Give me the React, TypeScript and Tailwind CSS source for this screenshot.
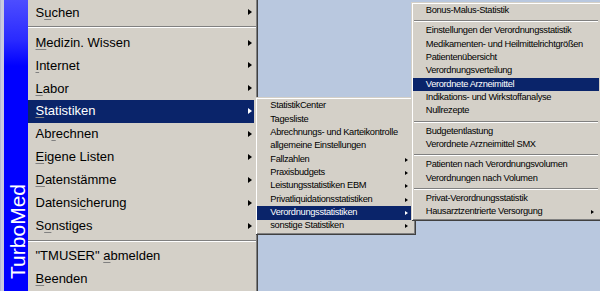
import React from "react";

type MainEntry =
  | { sep: true }
  | { pre: string; u: string; post: string; arrow?: boolean; active?: boolean };

const mainItems: MainEntry[] = [
  { pre: "S", u: "u", post: "chen", arrow: true },
  { sep: true },
  { pre: "", u: "M", post: "edizin. Wissen", arrow: true },
  { pre: "", u: "I", post: "nternet", arrow: true },
  { pre: "", u: "L", post: "abor", arrow: true },
  { pre: "", u: "S", post: "tatistiken", arrow: true, active: true },
  { pre: "Ab", u: "r", post: "echnen", arrow: true },
  { pre: "", u: "E", post: "igene Listen", arrow: true },
  { pre: "", u: "D", post: "atenstämme", arrow: true },
  { pre: "Datensi", u: "c", post: "herung", arrow: true },
  { pre: "S", u: "o", post: "nstiges", arrow: true },
  { sep: true },
  { pre: '"TMUSER" ', u: "a", post: "bmelden" },
  { pre: "", u: "B", post: "eenden" },
];

type SubEntry = { sep: true } | { label: string; arrow?: boolean; active?: boolean };

const statItems: SubEntry[] = [
  { label: "StatistikCenter" },
  { label: "Tagesliste" },
  { label: "Abrechnungs- und Karteikontrolle" },
  { label: "allgemeine Einstellungen" },
  { label: "Fallzahlen", arrow: true },
  { label: "Praxisbudgets", arrow: true },
  { label: "Leistungsstatistiken EBM", arrow: true },
  { label: "Privatliquidationsstatistiken", arrow: true },
  { label: "Verordnungsstatistiken", arrow: true, active: true },
  { label: "sonstige Statistiken", arrow: true },
];

const vdgItems: SubEntry[] = [
  { label: "Bonus-Malus-Statistik" },
  { sep: true },
  { label: "Einstellungen der Verordnungsstatistik" },
  { label: "Medikamenten- und Heilmittelrichtgrößen" },
  { label: "Patientenübersicht" },
  { label: "Verordnungsverteilung" },
  { label: "Verordnete Arzneimittel", active: true },
  { label: "Indikations- und Wirkstoffanalyse" },
  { label: "Nullrezepte" },
  { sep: true },
  { label: "Budgetentlastung" },
  { label: "Verordnete Arzneimittel SMX" },
  { sep: true },
  { label: "Patienten nach Verordnungsvolumen" },
  { label: "Verordnungen nach Volumen" },
  { sep: true },
  { label: "Privat-Verordnungsstatistik" },
  { label: "Hausarztzentrierte Versorgung", arrow: true },
];

function Arrow({ white, small }: { white?: boolean; small?: boolean }) {
  return small ? (
    <span
      className={`w-0 h-0 shrink-0 border-y-[2.5px] border-y-transparent border-l-[3px] ${white ? "border-l-white" : "border-l-black"}`}
    />
  ) : (
    <span
      className={`w-0 h-0 shrink-0 border-y-[3.5px] border-y-transparent border-l-[4px] ${white ? "border-l-white" : "border-l-black"}`}
    />
  );
}

function SubMenu({ items, className }: { items: SubEntry[]; className: string }) {
  return (
    <div
      className={`absolute bg-[#d4d0c8] p-[2.3px] shadow-[inset_1px_1px_0_#d4d0c8,inset_-1px_-1px_0_#404040,inset_2px_2px_0_#fff,inset_-2px_-2px_0_#808080] text-[9.3px] tracking-[-0.33px] ${className}`}
    >
      {items.map((it, i) =>
        "sep" in it ? (
          <div key={i} className="h-[7px] flex flex-col justify-center px-px">
            <div className="h-px bg-[#808080]" />
            <div className="h-px bg-white" />
          </div>
        ) : (
          <div
            key={i}
            className={`h-[13.35px] flex items-center pl-[13px] pr-[5.7px] ${it.active ? "bg-[#0a246a] text-white" : "text-black"}`}
          >
            <span className="flex-1 whitespace-nowrap">{it.label}</span>
            {it.arrow && <Arrow small white={it.active} />}
          </div>
        )
      )}
    </div>
  );
}

export default function App() {
  return (
    <div className="relative w-[600px] h-[291px] overflow-hidden bg-[#b9c8df] font-['Liberation_Sans',Arial,sans-serif]">
      {/* main menu */}
      <div className="flex h-full w-[258px]">
        <div className="w-[4px] bg-[#c9cadf] shadow-[inset_1px_0_0_#b4b8d2]" />
        <div className="w-[24px] flex flex-col justify-end items-start pb-[12.5px] bg-[linear-gradient(to_bottom,#4d4dff_0px,#2a2aff_40px,#0000ff_66px)]">
          <span className="[writing-mode:vertical-rl] rotate-180 text-white text-[21px] leading-[24px] translate-x-[2px]">
            TurboMed
          </span>
        </div>
        <div className="flex-1 bg-[#d4d0c8] pt-[0.85px] pr-[4px] text-[13px] shadow-[inset_-1px_0_0_#404040,inset_-2px_0_0_#808080]">
          {mainItems.map((it, i) =>
            "sep" in it ? (
              <div key={i} className="h-[7.4px] flex flex-col justify-center -mr-[2px]">
                <div className="h-px bg-[#808080]" />
                <div className="h-px bg-white" />
              </div>
            ) : (
              <div
                key={i}
                className={`h-[22.9px] flex items-center pl-[7.5px] pr-[2.5px] ${it.active ? "bg-[#0a246a] text-white" : "text-black"}`}
              >
                <span className="flex-1 whitespace-nowrap">
                  {it.pre}
                  <span className="underline decoration-[#808080] underline-offset-[2px]">{it.u}</span>
                  {it.post}
                </span>
                {it.arrow && <Arrow white={it.active} />}
              </div>
            )
          )}
        </div>
      </div>

      <SubMenu items={statItems} className="left-[255px] top-[97.3px] w-[161px]" />
      <SubMenu items={vdgItems} className="left-[410.5px] top-[2px] w-[191px]" />
    </div>
  );
}
